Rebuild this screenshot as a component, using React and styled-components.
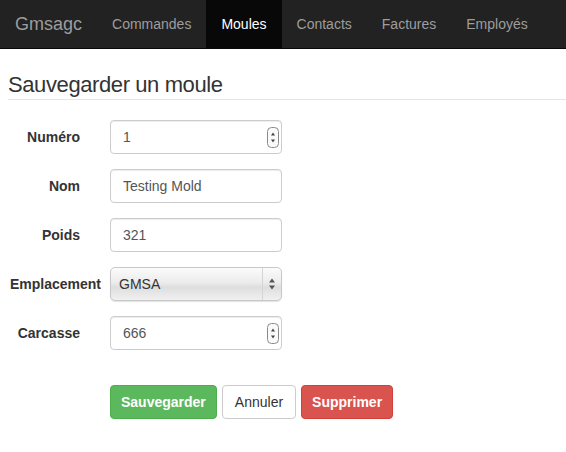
import React from 'react'
import styled, { createGlobalStyle } from 'styled-components'

const GlobalStyle = createGlobalStyle`
  html, body { margin: 0; padding: 0; background: #fff; }
  body {
    font-family: "Liberation Sans", Arial, sans-serif;
    font-size: 14px;
    color: #333;
  }
`;

// top bar
const Navbar = styled.nav`
  display: flex;
  height: 48px;
  background: #222;
  border-bottom: 1px solid #080808;
`;
const Brand = styled.a`
  display: flex;
  align-items: center;
  padding: 0 15px;
  font-size: 18px;
  color: #9d9d9d;
  text-decoration: none;
`;
const NavLink = styled.a`
  display: flex;
  align-items: center;
  padding: 0 15px;
  font-size: 14px;
  color: ${p => (p.$active ? '#fff' : '#9d9d9d')};
  background: ${p => (p.$active ? '#080808' : 'transparent')};
  text-decoration: none;
`;

const Page = styled.div`
  padding-left: 8px;
`;
const PageHeader = styled.h3`
  margin: 23px 0 0;
  padding-bottom: 1px;
  font-size: 22px;
  letter-spacing: -0.4px;
  font-weight: normal;
  line-height: 26px;
  border-bottom: 1px solid #e5e5e5;
`;

const Form = styled.form`
  display: flex;
  flex-direction: column;
  gap: 15px;
  padding-top: 20px;
`;
const Row = styled.div`
  display: flex;
  align-items: center;
`;
const Label = styled.label`
  width: 70px;
  margin-left: 10px;
  margin-right: 30px;
  text-align: right;
  white-space: nowrap;
  font-weight: bold;
`;
const Field = styled.div`
  position: relative;
  width: 172px;
  height: 34px;
`;
const Input = styled.input`
  box-sizing: border-box;
  width: 100%;
  height: 100%;
  padding: 6px 12px;
  font-family: inherit;
  font-size: 14px;
  color: #555;
  border: 1px solid #ccc;
  border-radius: 4px;
  box-shadow: inset 0 1px 1px rgba(0, 0, 0, 0.075);
  outline: none;
`;
const Select = styled.select`
  box-sizing: border-box;
  width: 100%;
  height: 100%;
  padding: 0 8px;
  appearance: none;
  font-family: inherit;
  font-size: 14px;
  color: #333;
  border: 1px solid #c8c8c8;
  border-radius: 5px;
  background: linear-gradient(#fbfbfb, #ececec 45%, #dedede 60%, #f0f0f0);
  box-shadow: 0 1px 1px rgba(0, 0, 0, 0.12);
  outline: none;
`;
const Spinner = styled.svg`
  position: absolute;
  top: 7px;
  right: 3px;
  pointer-events: none;
`;
const SelectArrows = styled.div`
  position: absolute;
  top: 1px;
  right: 1px;
  bottom: 1px;
  width: 18px;
  display: flex;
  align-items: center;
  justify-content: center;
  border-left: 1px solid #d4d4d4;
  pointer-events: none;
`;

const Actions = styled.div`
  display: flex;
  gap: 5px;
  margin: 35px 0 0 110px;
`;
const Button = styled.button`
  height: 34px;
  padding: 0 ${p => (p.$bold ? 10 : 12)}px;
  font-family: inherit;
  font-size: 14px;
  border-radius: 4px;
  border: 1px solid ${p => p.$border};
  background: ${p => p.$bg};
  color: ${p => p.$color};
  font-weight: ${p => (p.$bold ? 'bold' : 'normal')};
`;

const NumberSpin = () => (
  <Spinner width="12" height="21" viewBox="0 0 12 21">
    <rect x="0.5" y="0.5" width="11" height="20" rx="4" fill="#fafafa" stroke="#8a8a8a" />
    <path d="M4 8.5 L6 5.5 L8 8.5 Z" fill="#444" />
    <path d="M4 12.5 L6 15.5 L8 12.5 Z" fill="#444" />
  </Spinner>
);

const App = () => {
  const tabs = ['Commandes', 'Moules', 'Contacts', 'Factures', 'Employés'];
  return (
    <>
      <GlobalStyle />
      <Navbar>
        <Brand>Gmsagc</Brand>
        {tabs.map(t => (
          <NavLink key={t} $active={t === 'Moules'}>{t}</NavLink>
        ))}
      </Navbar>
      <Page>
        <PageHeader>Sauvegarder un moule</PageHeader>
      </Page>
      <Form>
        <Row>
          <Label>Numéro</Label>
          <Field>
            <Input defaultValue="1" />
            <NumberSpin />
          </Field>
        </Row>
        <Row>
          <Label>Nom</Label>
          <Field><Input defaultValue="Testing Mold" /></Field>
        </Row>
        <Row>
          <Label>Poids</Label>
          <Field><Input defaultValue="321" /></Field>
        </Row>
        <Row>
          <Label>Emplacement</Label>
          <Field>
            <Select defaultValue="GMSA">
              <option>GMSA</option>
            </Select>
            <SelectArrows>
              <svg width="8" height="14" viewBox="0 0 8 14">
                <path d="M1 5.5 L4 1.5 L7 5.5 Z" fill="#555" />
                <path d="M1 8.5 L4 12.5 L7 8.5 Z" fill="#555" />
              </svg>
            </SelectArrows>
          </Field>
        </Row>
        <Row>
          <Label>Carcasse</Label>
          <Field>
            <Input defaultValue="666" />
            <NumberSpin />
          </Field>
        </Row>
      </Form>
      <Actions>
        <Button $bg="#5cb85c" $border="#4cae4c" $color="#fff" $bold>Sauvegarder</Button>
        <Button $bg="#fff" $border="#ccc" $color="#333">Annuler</Button>
        <Button $bg="#d9534f" $border="#d43f3a" $color="#fff" $bold>Supprimer</Button>
      </Actions>
    </>
  )
}

export default App
